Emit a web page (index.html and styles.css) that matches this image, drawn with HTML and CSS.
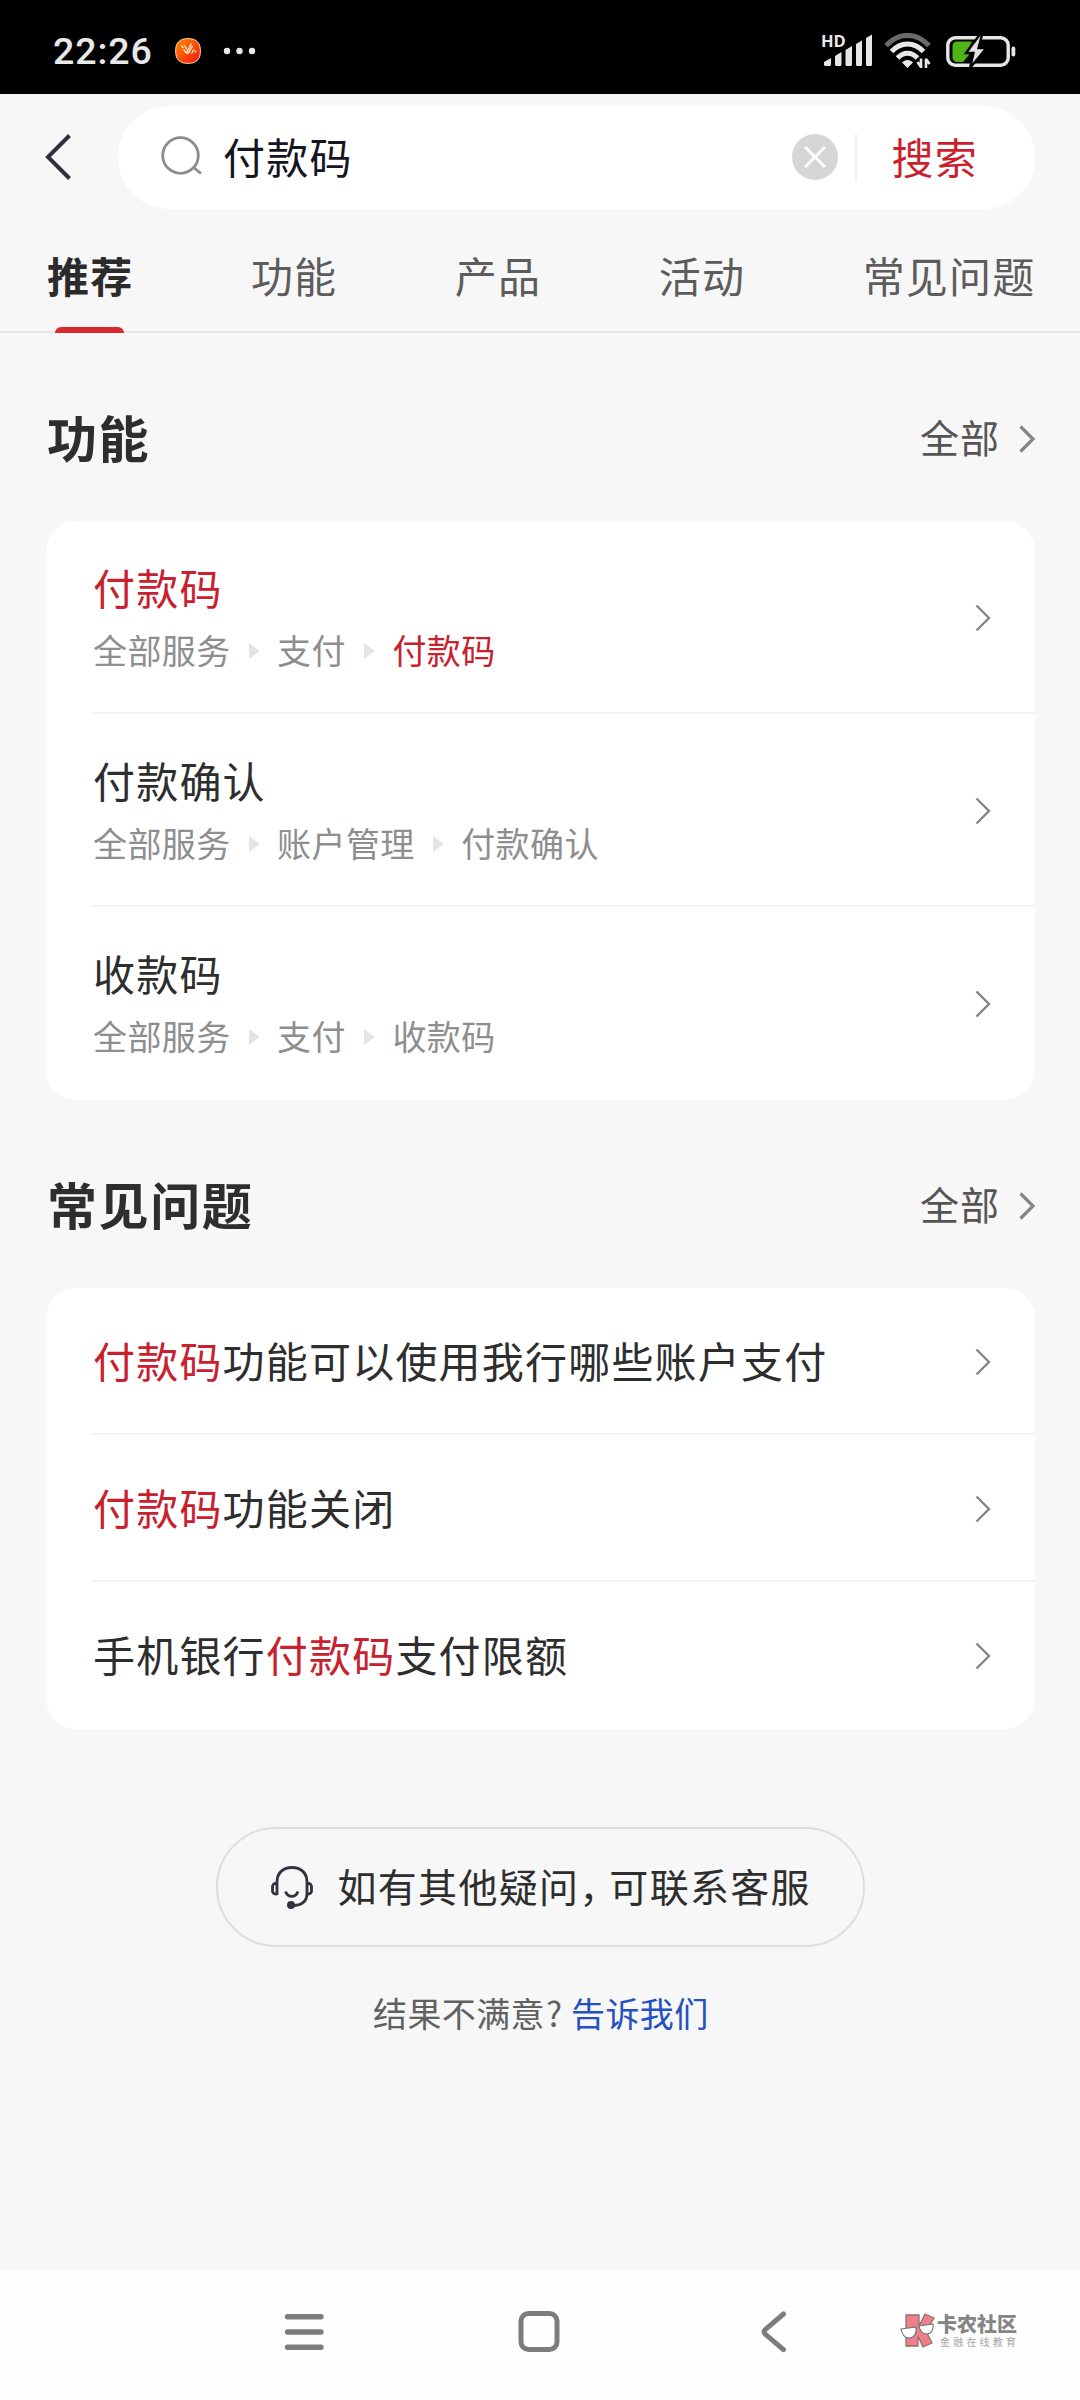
FILE: index.html
```html
<!DOCTYPE html>
<html lang="zh-CN">
<head>
<meta charset="utf-8">
<title>搜索</title>
<link rel="stylesheet" href="styles.css">
</head>
<body>
<svg width="0" height="0" class="defs">
  <symbol id="chev" viewBox="0 0 18 30"><path d="M2.5 2.5 15 15 2.5 27.5" fill="none" stroke="currentColor"/></symbol>
</svg>
<div class="screen">
  <div class="status">
    <span class="time">22:26</span>
    <svg class="app" width="26" height="26" viewBox="0 0 26 26">
      <defs><linearGradient id="g" x1="0" y1="0" x2="1" y2="1"><stop offset="0" stop-color="#ff8a00"/><stop offset="1" stop-color="#f51212"/></linearGradient></defs>
      <rect x=".7" y=".7" width="24.6" height="24.6" rx="10" fill="url(#g)" stroke="#ffd9a8" stroke-width="1"/>
      <path d="M6.500 7.500l1.800 2.500M9.500 7.500l2.500 4M8.500 11.500l3 3.500 5-9.500M13 16l4.500-8M16.500 15.500l2.500-4M20 14.500l1-1.500" stroke="#fff0c8" stroke-width="1.400" fill="none"/>
    </svg>
    <svg class="dots" width="34" height="8" viewBox="0 0 34 8" fill="#e8e8e8"><circle cx="4" cy="4" r="3.2"/><circle cx="16.5" cy="4" r="3.2"/><circle cx="29" cy="4" r="3.2"/></svg>
    <div class="signal">
      <span class="hd">HD</span>
      <svg width="50" height="34" viewBox="0 0 50 34" fill="#e6e6e6">
        <path d="M2 28l7-4v6.500a1.500 1.500 0 0 1-1.500 1.500h-4A1.500 1.500 0 0 1 2 30.500zM13 22l6.500-4v12.500a1.500 1.500 0 0 1-1.500 1.500h-3.500a1.500 1.500 0 0 1-1.500-1.500zM23.500 16l6.500-4v18.500a1.500 1.500 0 0 1-1.500 1.500H25a1.500 1.500 0 0 1-1.500-1.500zM34 10l6-3.500v24a1.500 1.500 0 0 1-1.500 1.500h-3a1.500 1.500 0 0 1-1.500-1.500zM44 4l6-3.500v30a1.500 1.500 0 0 1-1.500 1.500h-3a1.500 1.500 0 0 1-1.500-1.500z"/>
      </svg>
    </div>
    <svg class="wifi" width="48" height="36" viewBox="0 0 48 36" fill="none">
      <path d="M2 12.500C15-1 32-1 45 12.500" stroke="#6a6a6a" stroke-width="5"/>
      <path d="M7.500 18.500C17 8.500 30 8.500 39.500 18.500" stroke="#e8e8e8" stroke-width="5"/>
      <path d="M13.500 25C19.500 18.500 27.500 18.500 33.500 25" stroke="#e8e8e8" stroke-width="5"/>
      <path d="M18 29.500c3-3.500 8-3.500 11 0L23.500 35z" fill="#e8e8e8"/>
      <path d="M37 25.500V35M33.500 29l3.500 5M42 35v-9.500M45.500 31 42 26" stroke="#e8e8e8" stroke-width="2.600"/>
    </svg>
    <svg class="batt" width="70" height="34" viewBox="0 0 70 34">
      <rect x="1.800" y="3.800" width="60.400" height="27.400" rx="7.500" fill="none" stroke="#e6e6e6" stroke-width="3.400"/>
      <path d="M11 7.500h15l-6 11h5l-8 9.500H11a4.500 4.500 0 0 1-4.500-4.500V12A4.500 4.500 0 0 1 11 7.500z" fill="#4fb516"/>
      <path d="M33.500 1 20 19h7.500L24 34 40.500 14h-8L36 1z" fill="#e2e2e2" stroke="#000" stroke-width="2.400"/>
      <rect x="65.500" y="12.500" width="3.800" height="10" rx="1.900" fill="#e6e6e6"/>
    </svg>
  </div>

  <div class="searchrow">
    <svg class="back" width="28" height="48" viewBox="0 0 28 48"><path d="M25.500 2.500 4 24l21.500 21.500" fill="none" stroke="#30303c" stroke-width="4"/></svg>
    <div class="searchbox">
      <svg class="mag" width="42" height="42" viewBox="0 0 42 42" fill="none" stroke="#8c8c8c" stroke-width="2.800"><circle cx="19.500" cy="19.500" r="17.800"/><path d="M32 31l8 6.500"/></svg>
      <span class="query">付款码</span>
      <svg class="clear" width="46" height="46" viewBox="0 0 46 46"><circle cx="23" cy="23" r="23" fill="#d6d6d6"/><path d="M13 13l20 20M33 13 13 33" stroke="#fff" stroke-width="2.800"/></svg>
      <span class="sep"></span>
      <span class="go">搜索</span>
    </div>
  </div>

  <div class="tabs">
    <span class="tab active">推荐</span><span class="tab">功能</span><span class="tab">产品</span><span class="tab">活动</span><span class="tab">常见问题</span>
  </div>

  <div class="head"><h2>功能</h2><span class="all"><span>全部</span><svg class="chev"><use href="#chev"/></svg></span></div>
  <div class="card">
    <div class="row fn"><div class="body"><div class="name"><em>付款码</em></div>
      <div class="crumb"><span>全部服务</span><i></i><span>支付</span><i></i><em>付款码</em></div></div><svg class="chev"><use href="#chev"/></svg></div>
    <div class="row fn"><div class="body"><div class="name">付款确认</div>
      <div class="crumb"><span>全部服务</span><i></i><span>账户管理</span><i></i><span>付款确认</span></div></div><svg class="chev"><use href="#chev"/></svg></div>
    <div class="row fn"><div class="body"><div class="name">收款码</div>
      <div class="crumb"><span>全部服务</span><i></i><span>支付</span><i></i><span>收款码</span></div></div><svg class="chev"><use href="#chev"/></svg></div>
  </div>

  <div class="head"><h2>常见问题</h2><span class="all"><span>全部</span><svg class="chev"><use href="#chev"/></svg></span></div>
  <div class="card">
    <div class="row faq"><div class="body"><div class="name"><em>付款码</em>功能可以使用我行哪些账户支付</div></div><svg class="chev"><use href="#chev"/></svg></div>
    <div class="row faq"><div class="body"><div class="name"><em>付款码</em>功能关闭</div></div><svg class="chev"><use href="#chev"/></svg></div>
    <div class="row faq"><div class="body"><div class="name">手机银行<em>付款码</em>支付限额</div></div><svg class="chev"><use href="#chev"/></svg></div>
  </div>

  <div class="service">
    <svg width="44" height="44" viewBox="0 0 44 44" fill="none" stroke="#33333d" stroke-width="2.800">
      <path d="M7 30V17C7 8 13 2.500 22 2.500S37 8 37 17v11c0 8-5 12-13 12.500"/>
      <path d="M7 18.500H5.500a3 3 0 0 0-3 3V26a3 3 0 0 0 3 3H7M37 18.500h1.500a3 3 0 0 1 3 3V26a3 3 0 0 1-3 3H37"/>
      <path d="M15.500 26.500c2.500 6.500 10 6.500 12.500 0"/><circle cx="21" cy="40" r="2.600" fill="#33333d"/>
    </svg>
    <span>如有其他疑问<b>，</b>可联系客服</span>
  </div>
  <div class="feedback">结果不满意<span class="q">?</span><a>告诉我们</a></div>

  <div class="nav">
    <svg width="48" height="48" viewBox="0 0 48 48" stroke="#7c7c7c" stroke-width="5.400" stroke-linecap="round"><path d="M7.500 8.700h33.500M7.500 24h33.500M7.500 39.300h33.500"/></svg>
    <svg width="48" height="48" viewBox="0 0 48 48" fill="none" stroke="#7c7c7c" stroke-width="5"><rect x="6" y="5.500" width="36" height="36" rx="7.500"/></svg>
    <svg width="48" height="48" viewBox="0 0 48 48" fill="none" stroke="#7c7c7c" stroke-width="5" stroke-linecap="round"><path d="M34.500 6 16.500 21.300q-3 2.500 0 5L34.500 41.700"/></svg>
    <div class="mark">
      <svg width="36" height="38" viewBox="0 0 36 38">
        <path d="M6 3h13v11l6-12 9 4-8 13 6 12-9 4-5-11v10H6z" fill="#ef7f88" stroke="#8d7070" stroke-width="1.300"/>
        <path d="M1 17l15-2c1 7-2 11-7 11s-7-4-8-9zM19 14l14-2c1 6-2 10-6 10s-7-3-8-8z" fill="#fff" stroke="#777" stroke-width="1.200"/>
      </svg>
      <div><div class="m1">卡农社区</div><div class="m2">金融在线教育</div></div>
    </div>
  </div>
</div>
</body>
</html>
```
FILE: styles.css
```css
* { box-sizing: border-box; margin: 0; padding: 0; }
body { width: 1080px; height: 2400px; overflow: hidden; background: #f7f7f7; color: #2e2e2e;
  font-family: "Noto Sans CJK SC", sans-serif; }
svg { display: block; flex: none; }
em, i { font-style: normal; }
em { color: #c9202e; }
.defs { position: absolute; }
.screen { width: 1080px; height: 2400px; display: flex; flex-direction: column; }

.status { height: 94px; flex: none; background: #000; display: flex; align-items: center; padding: 8px 64px 0 53px; color: #e8e8e8; }
.time { font: 500 37.5px/40px Roboto, sans-serif; letter-spacing: .9px; width: 122px; }
.dots { margin-left: 22px; }
.signal { margin-left: auto; position: relative; }
.hd { position: absolute; left: -1px; top: -1px; font: 700 16.5px/16px "Open Sans", sans-serif; }
.wifi { margin-left: 12px; }
.batt { margin-left: 14px; }

.searchrow { flex: none; height: 115px; padding: 12px 45px 0 44px; display: flex; align-items: center; }
.back { margin: 0 0 2px 0; }
.searchbox { margin-left: 46px; flex: 1; height: 103px; border-radius: 52px; background: #fff; display: flex; align-items: center; padding: 0 57px 0 43px; font-size: 42px; line-height: 60px; letter-spacing: 1.2px; }
.mag { margin-bottom: 1px; }
.query { margin: 0 0 4px 20px; color: #15151f; }
.clear { margin: 0 0 1px auto; }
.sep { width: 2px; height: 48px; background: #f0f0f0; margin: 0 35px 0 17px; }
.go { margin-bottom: 4px; color: #cc1f2d; }

.tabs { flex: none; height: 124px; border-bottom: 2px solid #e6e6e6; display: flex; gap: 117.5px; padding: 36px 0 0 47px; font-size: 42px; line-height: 60px; letter-spacing: 1.2px; color: #5c5c5c; }
.tab { position: relative; white-space: nowrap; }
.active { font-weight: 700; color: #2b2b2b; }
.active::after { content: ""; position: absolute; left: 8px; top: 82px; width: 69px; height: 6px; border-radius: 6px 6px 0 0; background: #d8292f; }

.head { flex: none; display: flex; align-items: center; justify-content: space-between; height: 188px; padding: 24px 44px 0 47px; }
.head h2 { margin-bottom: 6px; font-size: 50px; line-height: 70px; letter-spacing: 1.6px; }
.all { display: flex; align-items: center; font-size: 39px; line-height: 56px; letter-spacing: 1px; color: #555; }
.all span { margin-bottom: 6px; }
.chev { width: 18px; height: 30px; color: #858585; stroke-width: 2.4; }
.all .chev { margin: 0 0 1px 18px; stroke-width: 3.2; }

.card { flex: none; margin: 0 45px 0 46px; background: #fff; border-radius: 30px; }
.row { margin-left: 45px; display: flex; align-items: center; justify-content: space-between; padding: 2px 43px 0 0; border-bottom: 2px solid #f4f4f4; }
.row:last-child { border-bottom-color: transparent; }
.fn { height: 193px; }
.faq { height: 147px; }
.body { padding: 0 0 4px 2px; }
.name { font-size: 42px; line-height: 60px; letter-spacing: 1.2px; white-space: nowrap; }
.crumb { margin-top: 8px; display: flex; align-items: center; font-size: 34px; line-height: 50px; letter-spacing: .4px; color: #8e8e8e; }
.crumb i { margin: 2px 17px 0 18.500px; border-left: 11.500px solid #e4e4e4; border-top: 8px solid transparent; border-bottom: 8px solid transparent; }

.service { flex: none; align-self: center; margin-top: 98px; width: 649px; height: 120px; border: 2px solid #dedede; border-radius: 60px; display: flex; align-items: center; padding-left: 52px; font-size: 39px; line-height: 56px; letter-spacing: 1.300px; }
.service span { margin: 0 0 4px 24px; white-space: nowrap; }
.service b { font-weight: 400; letter-spacing: -9px; }
.feedback { margin-top: 41px; padding-left: 373px; display: flex; font-size: 34px; line-height: 50px; letter-spacing: .4px; color: #616161; }
.q { width: 26px; padding-left: 1px; }
.feedback a { color: #2450c4; }

.nav { margin-top: auto; flex: none; height: 130px; background: #fefefe; display: flex; align-items: center; gap: 186.500px; padding: 0 0 6px 280px; position: relative; }
.mark { position: absolute; left: 900px; top: 42px; display: flex; gap: 1px; white-space: nowrap; }
.m1 { font-size: 20px; line-height: 22px; font-weight: 900; color: #858585; padding-top: 1px; }
.m2 { font-size: 10px; line-height: 13px; letter-spacing: 3.200px; color: #a5a5a5; padding-left: 3px; }
```
